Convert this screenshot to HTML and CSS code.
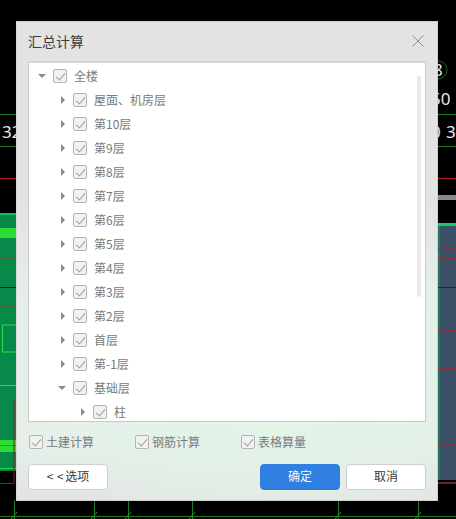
FILE: index.html
```html
<!DOCTYPE html>
<html lang="zh">
<head>
<meta charset="utf-8">
<title>汇总计算</title>
<link rel="stylesheet" href="styles.css">
</head>
<body>
<svg class="cad" width="456" height="519" viewBox="0 0 456 519" xmlns="http://www.w3.org/2000/svg">
  <rect width="456" height="519" fill="#000"/>
  <g stroke="#1f7a25" stroke-width="1">
    <path d="M0 114.500H16M0 146.500H16M438 114.500H456M438 146.500H456"/>
    <circle cx="438" cy="70" r="9" fill="none" stroke="#17691c"/>
  </g>
  <path d="M0 178.500H16M438 178.500H456" stroke="#a5141c" stroke-width="1.500"/>
  <rect x="438" y="195" width="18" height="5" fill="#8a8a8a"/>
  <text class="cad-t" x="2" y="138">32</text>
  <text class="cad-t" x="431" y="105">50</text>
  <text class="cad-t" x="431" y="138">0</text>
  <text class="cad-t" x="446" y="138">3</text>
  <text class="cad-t" x="433" y="76">8</text>
  <rect x="0" y="213" width="16" height="258" fill="#07894a"/>
  <rect x="0" y="213" width="16" height="2" fill="#16b85a"/>
  <rect x="0" y="228" width="16" height="10" fill="#2bdc32"/>
  <path d="M0 219.500H16M0 259H16M0 307H16" stroke="#8a4a2a" stroke-width="1"/>
  <path d="M0 287.500H16" stroke="#222" stroke-width="1"/>
  <path d="M2.500 325V352H16M2.500 325H16M0 385.500H16M0 468.500H16" stroke="#2bdc52" fill="none" stroke-width="1"/>
  <rect x="0" y="440" width="16" height="12" fill="#2bdc32"/>
  <path d="M0 445.500H16" stroke="#c8442a" stroke-width="1"/>
  <rect x="0" y="471" width="16" height="24" fill="#000"/>
  <path d="M0 483.500H14V400" stroke="#8f1a22" fill="none" stroke-width="1"/>
  <rect x="438" y="225" width="18" height="255" fill="#3c5068"/>
  <rect x="438" y="223" width="18" height="3" fill="#18cc6a"/>
  <rect x="438" y="226" width="2" height="254" fill="#1c7a58"/>
  <path d="M438 249H456M438 258.500H456M438 330.500H456M438 368.500H456M438 445H456M438 483H456" stroke="#8a3040" stroke-width="1.500"/>
  <path d="M438 287.500H456" stroke="#2a2030" stroke-width="1"/>
  <path d="M14.500 500V519M94.500 500V519M128.500 500V519M192.500 500V519M338.500 500V519M418.500 500V519M0 516.500H456" stroke="#1f7a25" stroke-width="1"/>
  <path d="M11 519L17 512M91 519L97 512M125 519L131 512M189 519L195 512M335 519L341 512M415 519L421 512" stroke="#2a9a30" stroke-width="1"/>
</svg>

<main class="dialog">
  <header class="titlebar">
    <h1 class="title">汇总计算</h1>
    <svg class="close" width="12" height="12" viewBox="0 0 12 12" xmlns="http://www.w3.org/2000/svg"><path d="M.5 .5L11.500 11.500M11.500 .5L.5 11.500" stroke="#8c8c8c" stroke-width="1" fill="none"/></svg>
  </header>

  <section class="tree">
    <div class="scrollbar"></div>
    <div class="row"><i class="arrow down"></i><i class="check"></i><span>全楼</span></div>
    <div class="row l1"><i class="arrow"></i><i class="check"></i><span>屋面、机房层</span></div>
    <div class="row l1"><i class="arrow"></i><i class="check"></i><span>第10层</span></div>
    <div class="row l1"><i class="arrow"></i><i class="check"></i><span>第9层</span></div>
    <div class="row l1"><i class="arrow"></i><i class="check"></i><span>第8层</span></div>
    <div class="row l1"><i class="arrow"></i><i class="check"></i><span>第7层</span></div>
    <div class="row l1"><i class="arrow"></i><i class="check"></i><span>第6层</span></div>
    <div class="row l1"><i class="arrow"></i><i class="check"></i><span>第5层</span></div>
    <div class="row l1"><i class="arrow"></i><i class="check"></i><span>第4层</span></div>
    <div class="row l1"><i class="arrow"></i><i class="check"></i><span>第3层</span></div>
    <div class="row l1"><i class="arrow"></i><i class="check"></i><span>第2层</span></div>
    <div class="row l1"><i class="arrow"></i><i class="check"></i><span>首层</span></div>
    <div class="row l1"><i class="arrow"></i><i class="check"></i><span>第-1层</span></div>
    <div class="row l1"><i class="arrow down"></i><i class="check"></i><span>基础层</span></div>
    <div class="row l2"><i class="arrow"></i><i class="check"></i><span>柱</span></div>
  </section>

  <section class="options">
    <label class="opt"><i class="check"></i><span>土建计算</span></label>
    <label class="opt"><i class="check"></i><span>钢筋计算</span></label>
    <label class="opt"><i class="check"></i><span>表格算量</span></label>
  </section>

  <footer class="actions">
    <button class="btn more"><span class="chev">&lt; &lt;</span>选项</button>
    <button class="btn primary">确定</button>
    <button class="btn">取消</button>
  </footer>
</main>
</body>
</html>
```
FILE: styles.css
```css
* { box-sizing: border-box; }
html, body { margin: 0; padding: 0; }
body {
  position: relative;
  width: 456px;
  height: 519px;
  overflow: hidden;
  background: #000;
  font-family: "Noto Sans CJK SC", "Noto Sans", sans-serif;
  font-size: 12px;
}
.cad { position: absolute; left: 0; top: 0; display: block; }
.cad-t { font-family: "Noto Sans", sans-serif; font-size: 17px; fill: #e8e8e8; }

.dialog {
  position: absolute;
  left: 16px;
  top: 21px;
  width: 422px;
  height: 480px;
  display: flex;
  flex-direction: column;
  padding: 0 11px;
  border: 1px solid #cfcfcf;
  border-left-color: #d8d8d8;
  background:
    radial-gradient(ellipse 300px 190px at 60% 80%, rgba(226, 244, 232, .95), rgba(226, 244, 232, 0) 100%),
    linear-gradient(180deg, #e3e3e3 0, #e3e3e3 38%, #e6efe9 60%, #e6efe9 88%, #e2e2e2 100%);
}
.titlebar {
  height: 39px;
  flex: none;
  display: flex;
  align-items: center;
  justify-content: space-between;
  padding: 0 2px 2px 0;
}
.title { margin: 0; font-size: 14px; font-weight: 400; color: #3c3c3c; line-height: 20px; }
.close { display: block; }

.tree {
  position: relative;
  height: 361px;
  flex: none;
  padding-top: 1px;
  background: #fff;
  border: 1px solid #c9c9c9;
  border-top-width: 2px;
  border-top-color: #d4d4d4;
  overflow: hidden;
  width: 398px;
}
.scrollbar {
  position: absolute;
  left: 388px;
  top: 13px;
  width: 4px;
  height: 221px;
  border-radius: 2px;
  background: #e9e9e9;
}
.row {
  height: 24px;
  display: flex;
  align-items: center;
  padding-left: 8px;
  color: #7a7a7a;
  line-height: 24px;
}
.row.l1 { padding-left: 28px; }
.row.l2 { padding-left: 48px; }
.row span { margin-left: 7px; }

.arrow {
  display: block;
  flex: none;
  width: 16px;
  height: 8px;
  position: relative;
}
.arrow::before {
  content: "";
  position: absolute;
  left: 4px;
  top: 0;
  border-style: solid;
  border-width: 4px 0 4px 4px;
  border-color: transparent transparent transparent #8a8a8a;
}
.arrow.down::before {
  left: 1px;
  top: 2px;
  border-width: 4px 4px 0 4px;
  border-color: #8a8a8a transparent transparent transparent;
}

.check {
  display: block;
  flex: none;
  position: relative;
  width: 14px;
  height: 14px;
  border: 1px solid #b4b4b4;
  border-radius: 2px;
  background: #f1f1f1;
}
.check::after {
  content: "";
  position: absolute;
  left: 4px;
  top: 1px;
  width: 4px;
  height: 8px;
  border-right: 1.500px solid #9d9d9d;
  border-bottom: 1.500px solid #9d9d9d;
  transform: rotate(40deg);
}

.options {
  flex: none;
  display: flex;
  margin-top: 12px;
  height: 16px;
  padding-left: 1px;
  gap: 41px;
}
.opt { display: flex; align-items: center; color: #7a7a7a; line-height: 16px; }
.opt span { margin-left: 3px; }

.actions {
  flex: none;
  display: flex;
  margin-top: 14px;
  gap: 6px;
  width: 398px;
}
.btn {
  width: 80px;
  height: 26px;
  padding: 0 0 2px;
  background: #fff;
  border: 1px solid #cfcfcf;
  border-radius: 4px;
  font: inherit;
  color: #3a3a3a;
  line-height: 22px;
}
.btn.more { margin-right: auto; }
.chev { letter-spacing: .5px; margin-right: 1px; }
.btn.primary { background: #2e7fe0; border-color: #2e7fe0; color: #f4f8ff; }
```
